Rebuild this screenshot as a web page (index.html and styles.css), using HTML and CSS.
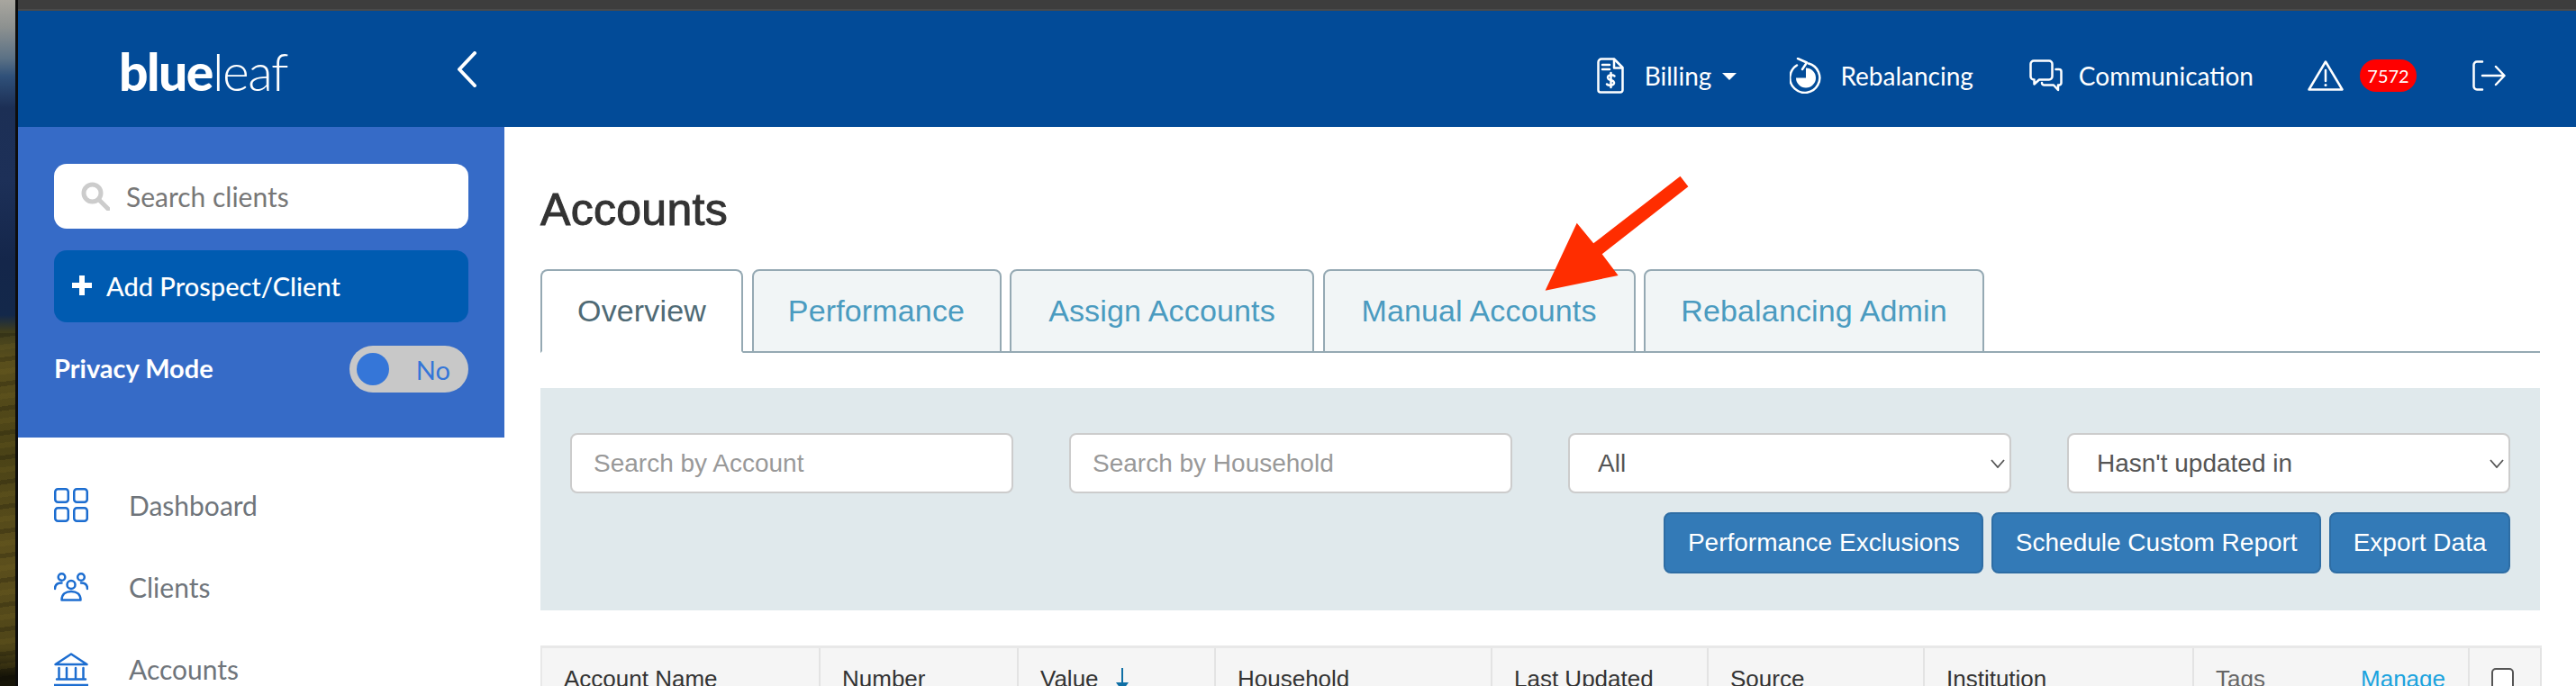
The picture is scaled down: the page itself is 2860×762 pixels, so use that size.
FILE: index.html
```html
<!DOCTYPE html>
<html lang="en">
<head>
<meta charset="utf-8">
<title>Accounts - Blueleaf</title>
<link rel="stylesheet" href="styles.css">
</head>
<body>
<div class="wallpaper"></div>
<div class="window">
  <div class="titlebar"></div>
  <header class="topnav">
    <div class="brand">
      <a class="logo"><b>blue</b><span>leaf</span>
        <svg class="logo-leaf" viewBox="0 0 12 20"><path d="M1 1C6 4 10 10 8 19C4 15 1 9 1 1Z"/></svg>
      </a>
      <svg class="collapse" viewBox="0 0 22 40"><path d="M20 2L3 20L20 38"/></svg>
    </div>
    <nav class="topmenu">
      <a class="top-item">
        <svg class="ti ti-bill" viewBox="0 0 30 40"><path d="M5 1.500H19L28.500 11V36A2.500 2.500 0 0 1 26 38.500H4A2.500 2.500 0 0 1 1.500 36V5A3.500 3.500 0 0 1 5 1.500Z"/><path d="M19 2V11.500H28"/><path d="M6 8H14M6 13H14"/><path d="M19.500 20.500C18.500 19 14 18.500 12.500 20.500C11 23 13 24.500 15.500 25C18 25.500 20 27 18.500 29.500C17 31.500 12.500 31 11 29.500M15.500 17V33"/></svg>
        <span>Billing</span><i class="caret"></i>
      </a>
      <a class="top-item top-rebal">
        <svg class="ti ti-reb" viewBox="0 0 36 40"><path d="M21 6.500A16.500 16.500 0 1 1 8 8.500"/><path d="M9 1L19 5.500L14 13"/><path class="solid" d="M18 11.500V22.500H7A11 11 0 1 0 18 11.500Z"/></svg>
        <span>Rebalancing</span>
      </a>
      <a class="top-item">
        <svg class="ti ti-com" viewBox="0 0 37 36"><path d="M5 1.500H22A3.500 3.500 0 0 1 25.500 5V19A3.500 3.500 0 0 1 22 22.500H11L5.500 27.500V22.500H5A3.500 3.500 0 0 1 1.500 19V5A3.500 3.500 0 0 1 5 1.500Z"/><path d="M29.500 11H33A2.500 2.500 0 0 1 35.500 13.500V26A2.500 2.500 0 0 1 33 28.500H32V34L27 28.500H16.500A2.500 2.500 0 0 1 14 26"/></svg>
        <span>Communication</span>
      </a>
      <a class="top-item top-alert">
        <svg class="ti ti-warn" viewBox="0 0 40 34"><path d="M20 1.500L38.500 32.500H1.500Z"/><path d="M20 11V23"/><circle class="solid" cx="20" cy="27.500" r="1.500"/></svg>
        <span class="badge">7572</span>
      </a>
      <a class="top-item">
        <svg class="ti ti-out" viewBox="0 0 37 34"><path d="M11 1.500H5A3.500 3.500 0 0 0 1.500 5V29A3.500 3.500 0 0 0 5 32.500H11"/><path d="M11 17H35M26 7L35.500 17L26 27"/></svg>
      </a>
    </nav>
  </header>
  <div class="layout">
    <aside class="sidebar">
      <div class="side-top">
        <label class="side-search">
          <svg class="search-ico" viewBox="0 0 32 32"><circle cx="12.500" cy="12.500" r="9.500"/><path d="M19.500 19.500L30 30"/></svg>
          <span>Search clients</span>
        </label>
        <a class="add-btn"><svg class="plus" viewBox="0 0 22 22"><path d="M11 0V22M0 11H22"/></svg><span>Add Prospect/Client</span></a>
        <div class="privacy">
          <strong>Privacy Mode</strong>
          <div class="toggle"><i class="knob"></i><span>No</span></div>
        </div>
      </div>
      <ul class="side-nav">
        <li>
          <svg class="ni" viewBox="0 0 38 38"><rect x="1.250" y="1.250" width="14.500" height="14.500" rx="3"/><rect x="22.250" y="1.250" width="14.500" height="14.500" rx="3"/><rect x="1.250" y="22.250" width="14.500" height="14.500" rx="3"/><rect x="22.250" y="22.250" width="14.500" height="14.500" rx="3"/></svg>
          <span>Dashboard</span>
        </li>
        <li>
          <svg class="ni" viewBox="0 0 38 32"><circle cx="8.500" cy="5" r="3.800"/><circle cx="30" cy="5" r="3.800"/><circle cx="19" cy="13.500" r="4.500"/><path d="M1 18C1 13.500 4 11.500 8.500 11.500M37 18C37 13.500 34 11.500 30 11.500"/><path d="M8.500 30.500C8.500 24 13 21 19 21C25 21 29.500 24 29.500 30.500Z"/></svg>
          <span>Clients</span>
        </li>
        <li>
          <svg class="ni" viewBox="0 0 38 38"><path d="M1.500 14L19 2.500L36.500 14Z"/><path d="M5.500 18V29M14 18V29M24 18V29M32.500 18V29M3 30.500H35M0 37H38"/></svg>
          <span>Accounts</span>
        </li>
      </ul>
    </aside>
    <main class="content">
      <h1>Accounts</h1>
      <ul class="tabs">
        <li class="tab active">Overview</li>
        <li class="tab">Performance</li>
        <li class="tab">Assign Accounts</li>
        <li class="tab">Manual Accounts</li>
        <li class="tab">Rebalancing Admin</li>
      </ul>
      <section class="filters">
        <div class="filter-row">
          <input class="field" type="text" placeholder="Search by Account">
          <input class="field" type="text" placeholder="Search by Household">
          <div class="select-wrap">
            <select class="field select"><option>All</option></select>
            <svg class="chev" viewBox="0 0 16 10"><path d="M1 1L8 9L15 1"/></svg>
          </div>
          <div class="select-wrap">
            <select class="field select"><option>Hasn't updated in</option></select>
            <svg class="chev" viewBox="0 0 16 10"><path d="M1 1L8 9L15 1"/></svg>
          </div>
        </div>
        <div class="actions">
          <button class="btn" type="button">Performance Exclusions</button>
          <button class="btn" type="button">Schedule Custom Report</button>
          <button class="btn" type="button">Export Data</button>
        </div>
      </section>
      <table class="accounts">
        <colgroup>
          <col class="c1"><col class="c2"><col class="c3"><col class="c4"><col class="c5"><col class="c6"><col class="c7"><col class="c8"><col class="c9">
        </colgroup>
        <thead>
          <tr>
            <th>Account Name</th>
            <th>Number</th>
            <th><span class="sorted">Value<svg class="sort" viewBox="0 0 14 26"><path class="stem" d="M7 0V20"/><path class="head" d="M0 16H14L7 26Z"/></svg></span></th>
            <th>Household</th>
            <th>Last Updated</th>
            <th>Source</th>
            <th>Institution</th>
            <th><div class="tags"><span>Tags</span><a>Manage</a></div></th>
            <th><input class="check" type="checkbox"></th>
          </tr>
        </thead>
      </table>
    </main>
  </div>
</div>
<svg class="annotation" viewBox="0 0 2860 762"><polygon points="1865.500,195.700 1874.400,207.300 1778.700,282.300 1796.600,306 1715.600,322.700 1750.700,247.700 1769.200,270.300"/></svg>
</body>
</html>
```

FILE: styles.css
```css
* { box-sizing: border-box; }
html, body { margin: 0; height: 762px; overflow: hidden; background: #fff; }
body { display: flex; font-family: "Liberation Sans", Arial, sans-serif; }
ul { list-style: none; margin: 0; padding: 0; }

.wallpaper {
  flex: 0 0 20px;
  border-right: 3px solid #0d0d0d;
  background:
    repeating-linear-gradient(172deg, rgba(0,0,0,.18) 0 5px, rgba(0,0,0,0) 5px 13px, rgba(140,120,40,.12) 13px 19px, rgba(0,0,0,0) 19px 27px) 0 370px / 100% 392px no-repeat,
    linear-gradient(180deg, #a8a69f 0, #8d9190 30px, #5b7185 65px, #2f5079 85px, #1c2f55 120px, #1d3058 200px, #14264a 290px, #13284a 350px, #3f3d1c 368px, #5a4f1c 400px, #4a4216 500px, #5c4f1c 620px, #4f4518 720px, #171508 750px);
}
.window { flex: 1; min-width: 0; display: flex; flex-direction: column; }
.titlebar { height: 12px; background: #3d3d3d; border-bottom: 2px solid #4a4a4a; }

.topnav { height: 129px; background: #024b98; display: flex; align-items: center; justify-content: space-between; padding-right: 78px; color: #fff; font-family: Lato, sans-serif; }
.brand { width: 540px; display: flex; align-items: center; padding-left: 112px; }
.logo { position: relative; display: block; font-size: 57px; line-height: 58px; letter-spacing: -1.500px; margin-top: 4px; width: 375px; }
.logo b { font-weight: 900; }
.logo span { font-weight: 300; }
.logo-leaf { position: absolute; left: 14px; top: 26px; width: 10px; height: 18px; fill: #024b98; }
.collapse { width: 22px; height: 40px; margin-top: 0; fill: none; stroke: #fff; stroke-width: 4; stroke-linecap: round; stroke-linejoin: round; }

.topmenu { display: flex; align-items: center; margin-top: 14px; }
.top-item { display: flex; align-items: center; font-size: 28px; margin-left: 62px; }
.top-item:first-child { margin-left: 0; }
.top-item.top-rebal { margin-left: 59px; }
.top-item.top-alert { margin-left: 60px; }
.ti { fill: none; stroke: #fff; stroke-width: 2.500; stroke-linecap: round; stroke-linejoin: round; }
.ti .solid { fill: #fff; stroke: none; }
.ti-bill { width: 30px; height: 40px; margin-right: 23px; }
.ti-reb { width: 36px; height: 40px; margin-right: 20px; }
.ti-com { width: 37px; height: 36px; margin-right: 18px; }
.ti-warn { width: 40px; height: 34px; }
.ti-out { width: 37px; height: 34px; }
.caret { width: 0; height: 0; margin-left: 12px; margin-top: 3px; border-left: 8px solid transparent; border-right: 8px solid transparent; border-top: 8px solid #fff; }
.badge { margin-left: 18px; width: 63px; height: 36px; border-radius: 18px; background: #ff0000; font-size: 20px; line-height: 36px; text-align: center; }

.layout { flex: 1; display: flex; min-height: 0; }
.sidebar { flex: 0 0 540px; font-family: Lato, sans-serif; }
.side-top { height: 345px; background: #366bc7; padding: 41px 40px 0; display: flex; flex-direction: column; }
.side-search { height: 72px; background: #fff; border-radius: 14px; display: flex; align-items: center; padding-left: 30px; color: #777; font-size: 30px; }
.search-ico { width: 32px; height: 32px; margin-right: 18px; fill: none; stroke: #ccc; stroke-width: 5; stroke-linecap: round; }
.add-btn { height: 80px; margin-top: 24px; border-radius: 14px; background: #005bb1; color: #fff; display: flex; align-items: center; padding-left: 20px; padding-bottom: 2px; font-size: 29px; font-weight: 500; }
.plus { width: 22px; height: 22px; margin-right: 16px; fill: none; stroke: #fff; stroke-width: 6; }
.privacy { height: 52px; margin-top: 26px; display: flex; align-items: center; justify-content: space-between; color: #fff; font-size: 29px; }
.privacy strong { font-weight: 700; padding-bottom: 3px; }
.toggle { width: 132px; height: 52px; border-radius: 26px; background: #c8c8c8; display: flex; align-items: center; padding: 0 20px 0 8px; justify-content: space-between; color: #3576d8; }
.knob { width: 36px; height: 36px; border-radius: 50%; background: #3576d8; }
.side-nav { padding-top: 29px; }
.side-nav li { height: 91px; display: flex; align-items: center; padding-left: 40px; color: #6f757b; font-size: 30px; }
.ni { width: 38px; height: 38px; margin-right: 45px; fill: none; stroke: #1c6dd0; stroke-width: 2.500; stroke-linejoin: round; stroke-linecap: round; }

.content { flex: 1; min-width: 0; padding: 0 40px; }
h1 { margin: 0; height: 158px; padding-top: 63px; font-size: 50px; line-height: 58px; font-weight: 400; letter-spacing: .3px; color: #333; -webkit-text-stroke: 1px #333; }
.tabs { display: grid; grid-template-columns: 225px 277px 338px 347px 378px; column-gap: 9.500px; height: 93px; border-bottom: 2px solid #95a9b3; }
.tab { height: 93px; border: 2px solid #95a9b3; border-radius: 8px 8px 0 0; background: #f1f5f6; color: #4a9bc0; font-size: 34px; line-height: 88px; text-align: center; letter-spacing: .15px; white-space: nowrap; }
.tab.active { background: #fff; color: #4f6a75; border-bottom-color: #fff; }

.filters { margin-top: 39px; height: 247px; background: #e0e9ec; padding: 50px 33px 0; }
.filter-row { display: grid; grid-template-columns: repeat(4, 492px); column-gap: 62px; }
.field { width: 100%; height: 67px; border: 2px solid #ccc; border-radius: 8px; background: #fff; padding: 0 24px; font: 28px "Liberation Sans", Arial, sans-serif; color: #555; outline: none; }
.field::placeholder { color: #999; opacity: 1; }
.select { appearance: none; -webkit-appearance: none; padding-left: 31px; }
.select-wrap { position: relative; }
.chev { position: absolute; right: 7px; top: 29px; width: 16px; height: 10px; fill: none; stroke: #555; stroke-width: 1.800; }
.actions { display: flex; justify-content: flex-end; gap: 9px; margin-top: 21px; }
.btn { height: 68px; padding: 0 24.500px; border: 2px solid #2e6da4; border-radius: 8px; background: #337ab7; color: #fff; font: 28px "Liberation Sans", Arial, sans-serif; }

.accounts { margin: 39px 0 0; width: 2220px; table-layout: fixed; border-collapse: collapse; border-top: 3px solid #e8e8e8; }
.c1 { width: 309px; } .c2 { width: 220px; } .c3 { width: 219px; } .c4 { width: 307px; } .c5 { width: 240px; } .c6 { width: 240px; } .c7 { width: 299px; } .c8 { width: 306px; } .c9 { width: 80px; }
.accounts th { height: 90px; padding: 19px 25px 0 24px; vertical-align: top; text-align: left; background: #f5f5f5; border-right: 2px solid #e3e3e3; font-size: 26px; line-height: 30px; font-weight: 400; color: #333; white-space: nowrap; }
.accounts th:first-child { border-left: 2px solid #e8e8e8; }
.sorted { position: relative; display: inline-block; }
.sort { position: absolute; left: 84px; top: 3px; width: 14px; height: 26px; }
.sort .stem { stroke: #0f6fa5; stroke-width: 2; }
.sort .head { fill: #0f6fa5; }
.tags { display: flex; justify-content: space-between; color: #666; }
.tags a { color: #1aa3de; }
.check { appearance: none; -webkit-appearance: none; width: 25px; height: 26px; margin: 3px 0 0; border: 2px solid #555; border-radius: 5px; background: #fff; display: block; }

.annotation { position: absolute; left: 0; top: 0; width: 2860px; height: 762px; pointer-events: none; }
.annotation polygon { fill: #ff2d00; }
```
